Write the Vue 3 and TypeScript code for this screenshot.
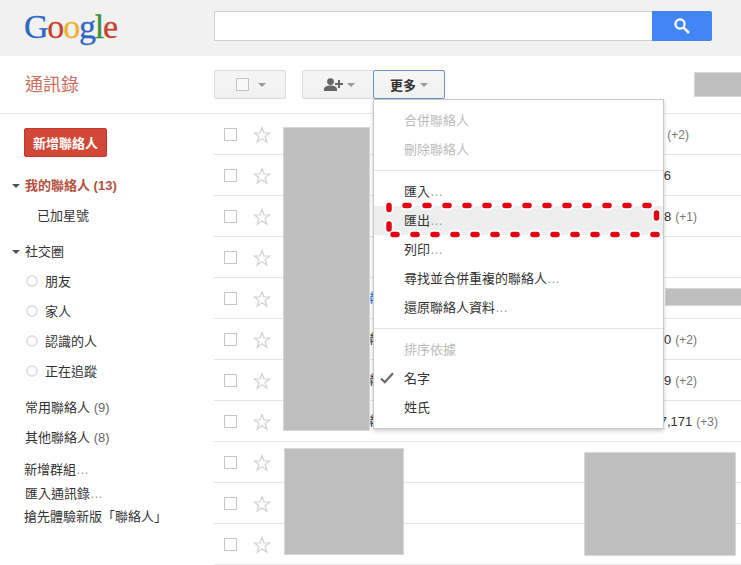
<script setup lang="ts">
interface Row {
  name?: string
  nameBlue?: boolean
  main?: string
  extra?: string
  end?: number
}

const rows: Row[] = [
  { extra: '(+2)', end: 688 },
  { main: '6', end: 670 },
  { main: '8', extra: '(+1)', end: 696 },
  {},
  { name: '聯', nameBlue: true },
  { name: '聯', main: '0', extra: '(+2)', end: 696 },
  { name: '聯', main: '9', extra: '(+2)', end: 696 },
  { name: '聯', main: '7,171', extra: '(+3)', end: 717 },
  {},
  {},
  {},
]

const circles = ['朋友', '家人', '認識的人', '正在追蹤']

function phoneWidth(end?: number): string {
  return end ? `${end - 374}px` : '0px'
}
</script>

<template>
  <div class="page">
    <header class="top">
      <div class="logo"><span class="blue">G</span><span class="red">o</span><span class="yellow">o</span><span class="blue">g</span><span class="green">l</span><span class="red">e</span></div>
      <div class="search">
        <div class="search-input"></div>
        <button class="search-btn" aria-label="搜尋">
          <svg width="18" height="18" viewBox="0 0 18 18" fill="none" stroke="#fff">
            <circle cx="7" cy="7" r="4.6" stroke-width="2.2" />
            <path d="M10.6 10.6 16 16" stroke-width="2.6" />
          </svg>
        </button>
      </div>
    </header>

    <div class="toolbar">
      <div class="title">通訊錄</div>
      <button class="tbtn select"><span class="box"></span><span class="arrow"></span></button>
      <button class="tbtn add">
        <svg width="20" height="14" viewBox="0 0 20 14" fill="#666">
          <circle cx="6.5" cy="3.6" r="3.4" />
          <path d="M0 13v-2c0-2.400 3-3.600 6.500-3.600S13 8.600 13 11v2z" />
          <path d="M15 2.500h2v3h3v2h-3v3h-2v-3h-3v-2h3z" transform="translate(-1 -.5)" />
        </svg>
        <span class="arrow"></span>
      </button>
      <button class="tbtn more"><span>更多</span><span class="arrow"></span></button>
    </div>

    <div class="body">
      <aside class="side">
        <button class="new">新增聯絡人</button>
        <div class="nav head first"><span class="tri"></span>我的聯絡人 (13)</div>
        <div class="nav sub">已加星號</div>
        <div class="nav plain social"><span class="tri"></span>社交圈</div>
        <div v-for="c in circles" :key="c" class="nav circle-item"><span class="circle"></span>{{ c }}</div>
        <div class="nav plain often">常用聯絡人 <span class="num">(9)</span></div>
        <div class="nav plain">其他聯絡人 <span class="num">(8)</span></div>
        <div class="links">
          <div class="link">新增群組<span class="dots">…</span></div>
          <div class="link shift">匯入通訊錄<span class="dots">…</span></div>
          <div class="link">搶先體驗新版「聯絡人」</div>
        </div>
      </aside>

      <main class="list">
        <div v-for="(r, i) in rows" :key="i" class="row">
          <span class="cb"></span>
          <svg class="star" width="18" height="18" viewBox="0 0 18 18" fill="none" stroke="#d2d2d2" stroke-width="1.200">
            <path d="M9 1.500 11 7h5.800l-4.700 3.500 1.800 5.800L9 12.800l-4.900 3.500 1.800-5.800L1.200 7H7z" />
          </svg>
          <span class="name" :class="{ blue2: r.nameBlue }">{{ r.name }}</span>
          <span v-if="r.end" class="phone" :style="{ width: phoneWidth(r.end) }">{{ r.main }}<span v-if="r.extra" class="extra">{{ r.extra }}</span></span>
        </div>
      </main>
    </div>

    <div class="block b1"></div>
    <div class="block b2"></div>
    <div class="block b3"></div>
    <div class="block b4"></div>
    <div class="block b5"></div>

    <div class="menu">
      <div class="mi off">合併聯絡人</div>
      <div class="mi off">刪除聯絡人</div>
      <div class="sep"></div>
      <div class="mi">匯入<span class="dots">…</span></div>
      <div class="mi hover">匯出<span class="dots">…</span></div>
      <div class="mi">列印<span class="dots">…</span></div>
      <div class="mi">尋找並合併重複的聯絡人<span class="dots">…</span></div>
      <div class="mi">還原聯絡人資料<span class="dots">…</span></div>
      <div class="sep"></div>
      <div class="mi off">排序依據</div>
      <div class="mi checked">
        <svg class="check" width="14" height="12" viewBox="0 0 14 12" fill="none" stroke="#666" stroke-width="2.200">
          <path d="M1 6.500 4.800 10.200 13 1.200" />
        </svg>
        名字
      </div>
      <div class="mi">姓氏</div>
    </div>

    <svg class="dash" width="741" height="565" viewBox="0 0 741 565" fill="none" stroke-linecap="round">
      <g stroke="#fff" stroke-width="9">
        <path d="M405 205.500H650M393 234.500H657" stroke-dasharray="4 16" />
        <path d="M389 205.500v4M389 224v5M656.500 213v5" />
      </g>
      <g stroke="#e60012" stroke-width="5.500">
        <path d="M405 205.500H650M393 234.500H657" stroke-dasharray="4 16" />
        <path d="M389 205.500v4M389 224v5M656.500 213v5" />
      </g>
    </svg>
  </div>
</template>

<style scoped>
.page {
  position: relative;
  width: 741px;
  height: 565px;
  overflow: hidden;
  background: #fff;
  font-family: "Liberation Sans", "Noto Sans CJK TC", sans-serif;
  font-size: 13px;
  color: #333;
}
button {
  font: inherit;
  padding: 0;
}
.top {
  display: flex;
  align-items: flex-start;
  height: 56px;
  background: #f1f1f1;
  box-sizing: border-box;
}
.logo {
  width: 190px;
  margin-left: 24px;
  margin-top: 6px;
  font-family: "Liberation Serif", serif;
  font-size: 34px;
  line-height: 42px;
  letter-spacing: -1.2px;
  -webkit-text-stroke: 0.3px currentColor;
}
.blue { color: #2f67c9; }
.red { color: #c8432f; }
.yellow { color: #eab52e; }
.green { color: #35923f; }
.search {
  display: flex;
  margin-top: 11px;
}
.search-input {
  width: 438px;
  height: 30px;
  box-sizing: border-box;
  background: #fff;
  border: 1px solid #cfcfcf;
  border-right: 0;
}
.search-btn {
  display: flex;
  align-items: center;
  justify-content: center;
  width: 60px;
  height: 30px;
  background: #4285f4;
  border: 0;
  border-radius: 0 2px 2px 0;
}
.toolbar {
  display: flex;
  align-items: flex-start;
  box-sizing: border-box;
  height: 58px;
  padding-top: 14px;
  border-bottom: 1px solid #e5e5e5;
}
.title {
  width: 189px;
  margin-left: 25px;
  font-size: 18px;
  line-height: 30px;
  color: #c8705f;
}
.tbtn {
  display: flex;
  align-items: center;
  box-sizing: border-box;
  height: 29px;
  border: 1px solid #dcdcdc;
  border-radius: 2px;
  background: linear-gradient(#f5f5f5, #f1f1f1);
  color: #444;
}
.select {
  width: 72px;
  margin-right: 16px;
  padding-left: 21px;
}
.box {
  width: 13px;
  height: 13px;
  box-sizing: border-box;
  background: #f8f8f8;
  border: 1px solid #c4c4c4;
  margin-right: 9px;
}
.arrow {
  width: 0;
  height: 0;
  border-left: 4px solid transparent;
  border-right: 4px solid transparent;
  border-top: 4px solid #999;
}
.add {
  width: 71px;
  padding-left: 21px;
  border-radius: 2px 0 0 2px;
  border-right: 0;
}
.add svg {
  margin-right: 3px;
}
.more {
  width: 72px;
  padding-left: 16px;
  border-color: #6a94c4;
  font-weight: bold;
  font-size: 13px;
  color: #333;
  background: linear-gradient(#f6f6f6, #f1f1f1);
}
.more .arrow {
  margin-left: 4px;
}
.body {
  display: flex;
}
.side {
  width: 214px;
  flex: none;
}
.new {
  display: block;
  width: 83px;
  height: 29px;
  margin: 14px 0 0 24px;
  background: #d14836;
  border: 1px solid #c53727;
  border-radius: 2px;
  color: #fff;
  font-weight: bold;
  font-size: 13px;
}
.nav {
  position: relative;
  height: 30px;
  line-height: 30px;
  white-space: nowrap;
}
.head {
  padding-left: 25px;
  font-weight: bold;
  color: #b5503f;
}
.first { margin-top: 14px; }
.plain { padding-left: 25px; }
.social { margin-top: 6px; }
.often { margin-top: 6px; }
.sub { padding-left: 37px; }
.tri {
  position: absolute;
  left: 12px;
  top: 13px;
  width: 0;
  height: 0;
  border-left: 4px solid transparent;
  border-right: 4px solid transparent;
  border-top: 4px solid #555;
}
.circle-item { padding-left: 45px; }
.circle {
  position: absolute;
  left: 26px;
  top: 8px;
  width: 12px;
  height: 12px;
  box-sizing: border-box;
  border: 2px solid #e3e3e3;
  border-radius: 50%;
}
.num { color: #666; }
.links {
  margin-top: 5px;
  padding-left: 24px;
}
.link {
  height: 23.500px;
  line-height: 23.500px;
  white-space: nowrap;
}
.shift { margin-left: 1px; }
.dots { color: #999; }
.list {
  flex: 1;
  min-width: 0;
}
.row {
  display: flex;
  align-items: center;
  box-sizing: border-box;
  height: 41px;
  border-bottom: 1px solid #e5e5e5;
  white-space: nowrap;
}
.cb {
  width: 13px;
  height: 13px;
  box-sizing: border-box;
  margin-left: 10px;
  border: 1px solid #c6c6c6;
}
.star {
  margin-left: 16px;
  margin-top: 2px;
  flex: none;
}
.name {
  flex: none;
  width: 104px;
  height: 18px;
  line-height: 18px;
  text-align: right;
  color: #222;
}
.blue2 { color: #15c; }
.phone {
  flex: none;
  text-align: right;
  color: #333;
}
.extra {
  margin-left: 4px;
  font-size: 12px;
  color: #777;
}
.block {
  position: absolute;
  background: #bfbfbf;
  border: 1px solid #d8d8d8;
  box-sizing: border-box;
}
.b1 { left: 283px; top: 127px; width: 87px; height: 304px; }
.b2 { left: 284px; top: 448px; width: 120px; height: 107px; }
.b3 { left: 584px; top: 452px; width: 152px; height: 104px; }
.b4 { left: 694px; top: 72px; width: 47px; height: 25px; border-right: 0; }
.b5 { left: 665px; top: 288px; width: 76px; height: 18px; border-right: 0; }
.menu {
  position: absolute;
  left: 373px;
  top: 99px;
  width: 291px;
  box-sizing: border-box;
  padding: 6px 0;
  background: #fff;
  border: 1px solid #c8c8c8;
  box-shadow: 0 2px 4px rgba(0, 0, 0, 0.2);
}
.mi {
  position: relative;
  height: 29px;
  line-height: 29px;
  padding-left: 30px;
  color: #333;
  white-space: nowrap;
}
.off { color: #bbb; }
.hover { background: #eee; }
.check {
  position: absolute;
  left: 6px;
  top: 8px;
}
.sep {
  height: 1px;
  margin: 6px 0;
  background: #e5e5e5;
}
.dash {
  position: absolute;
  left: 0;
  top: 0;
  pointer-events: none;
}
</style>
